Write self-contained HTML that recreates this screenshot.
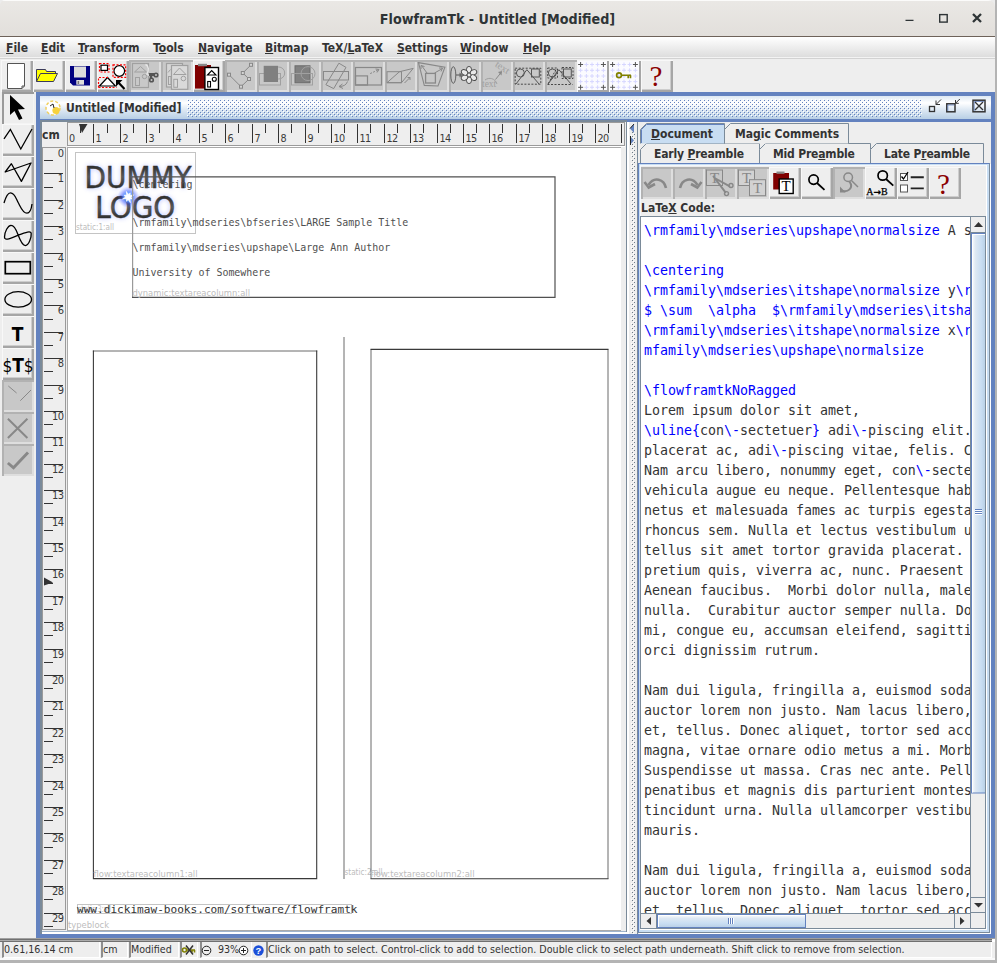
<!DOCTYPE html><html><head><meta charset="utf-8"><title>FlowframTk - Untitled [Modified]</title><style>
*{box-sizing:border-box}
html,body{margin:0;padding:0}
body{width:997px;height:963px;overflow:hidden;background:#b4b4b4;font-family:"DejaVu Sans Condensed","Liberation Sans",sans-serif;font-size:12px;color:#333;position:relative}
.a{position:absolute}
#win{left:0;top:0;width:995px;height:960px;background:#eee;border-radius:5px 7px 0 0;overflow:hidden}
#tb{left:0;top:0;width:995px;height:37px;background:linear-gradient(#eae8e5,#e2dfdb);border-bottom:1px solid #6e6259;border-top:1px solid #fbfbfa}
#title{left:0;top:10px;width:995px;text-align:center;font-weight:bold;font-size:14.2px;color:#2e3436;line-height:18px;white-space:nowrap}
#menu{left:0;top:37px;width:995px;height:23px;background:linear-gradient(#fff 0,#dcdcdc 20.5px,#f3f3f3 20.5px,#f3f3f3 21.5px,#d2d2d2 21.5px,#d2d2d2 22.5px,#eee 22.5px)}
.mi{position:absolute;top:4px;font-weight:bold;font-size:12px;line-height:15px;color:#333;white-space:nowrap}
u{text-decoration:underline;text-underline-offset:1px}
.btn{position:absolute;width:32px;height:32px;background:#eee;box-shadow:inset 1px 1px 0 #f8f8f8,inset -2px -2px 0 #a6a6a6,inset -3px -3px 0 #cdcdcd}
.btn.dis{background:#c8c8c8;box-shadow:inset 2px 2px 0 #b2b2b2,inset -2px -2px 0 #dedede}
.btn.sel{background:#eee;box-shadow:inset 2px 2px 0 #9a9a9a,inset -1px -1px 0 #f4f4f4}
.btn svg{position:absolute;left:0;top:0}
#if{left:36px;top:92px;width:959px;height:846px;background:#6382bf}
#ift{left:4px;top:4px;width:951px;height:23px;background:linear-gradient(#dde8f3 0%,#fff 30%,#dde8f3 60%,#b8cfe5 100%)}
#iftt{left:26px;top:4px;font-weight:bold;font-size:12px;line-height:17px;color:#333;white-space:nowrap}
#ifc{left:6px;top:30px;width:949px;height:812px;overflow:hidden;background:#eee}
#ifcb{left:4px;top:28px;width:587px;height:814px;background:#7a8a99}
#status{left:0;top:938px;width:995px;height:22px;background:#eee}
#code .ln{font-family:"DejaVu Sans Mono","Liberation Mono",monospace;font-size:13.3px;line-height:20px;height:20px;white-space:pre;color:#333;letter-spacing:-0.01px}
#code .b{color:#0000ff}
#code .k{color:#333}
.sb{position:absolute;top:4px;height:16px;padding-top:2px;border-style:solid;border-width:0 1px 1px 2px;border-color:#8e8e8e #fff #fff #8e8e8e;font-size:10.6px;line-height:11px;padding-left:0px;background:#eee;white-space:nowrap;overflow:hidden;color:#333}
</style></head><body>
<div class="a" style="left:0;top:0;width:995px;height:10px;background:#ececec"></div>
<div id="win" class="a">
<div id="tb" class="a"></div><div id="title" class="a">FlowframTk - Untitled [Modified]</div>
<svg class="a" style="left:900px;top:8px" width="90" height="20" viewBox="900 8 90 20"><path d="M905.500 20.300h8" stroke="#2e3436" stroke-width="1.300" fill="none"/><rect x="939.700" y="14.600" width="7.500" height="7.500" fill="none" stroke="#2e3436" stroke-width="1.400"/><path d="M973 14l8 8M981 14l-8 8" stroke="#2e3436" stroke-width="2.300" fill="none"/></svg>
<div id="menu" class="a">
<div class="mi" style="left:6px"><u>F</u>ile</div>
<div class="mi" style="left:41px"><u>E</u>dit</div>
<div class="mi" style="left:78px"><u>T</u>ransform</div>
<div class="mi" style="left:153px">T<u>o</u>ols</div>
<div class="mi" style="left:198px"><u>N</u>avigate</div>
<div class="mi" style="left:265px"><u>B</u>itmap</div>
<div class="mi" style="left:322px">TeX/<u>L</u>aTeX</div>
<div class="mi" style="left:397px"><u>S</u>ettings</div>
<div class="mi" style="left:460px"><u>W</u>indow</div>
<div class="mi" style="left:523px"><u>H</u>elp</div>
</div>
<div class="btn " style="left:1px;top:60px"><svg width="32" height="32" viewBox="0 0 32 32"><path d="M6.500 3.500H23.500V26L21 28.500H6.500Z" fill="#fff" stroke="#555" stroke-width="1"/><path d="M23.500 26H21V28.500" fill="none" stroke="#555"/></svg></div>
<div class="btn " style="left:33px;top:60px"><svg width="32" height="32" viewBox="0 0 32 32"><path d="M3.500 21.500V9.500H12.500L13.500 11.500H22.500V13.500" fill="#ff0" stroke="#3a3a5a" stroke-width="1"/><path d="M3.500 21.500L7.500 13.500H24.500L20.500 21.500Z" fill="#ff0" stroke="#3a3a5a" stroke-width="1" stroke-linejoin="round"/></svg></div>
<div class="btn " style="left:65px;top:60px"><svg width="32" height="32" viewBox="0 0 32 32"><path d="M5 6H25V25.500H8L5 22.500Z" fill="#000080"/><rect x="9" y="6.500" width="12" height="11" fill="#dcdcdc"/><rect x="11.300" y="20" width="7.700" height="4.700" fill="#dcdcdc"/><rect x="12.600" y="21" width="1.500" height="3" fill="#777"/></svg></div>
<div class="btn " style="left:97px;top:60px"><svg width="32" height="32" viewBox="0 0 32 32"><rect x="4" y="5.200" width="6.500" height="5.200" fill="#fff" stroke="#000" stroke-width="1.200"/><rect x="2.500" y="3.500" width="9.500" height="8.500" fill="none" stroke="#f00" stroke-width="1.200" stroke-dasharray="2 1.500"/><circle cx="22.300" cy="11" r="5.300" fill="#fff" stroke="#000" stroke-width="1.200"/><rect x="16" y="4.800" width="12.600" height="12.600" fill="none" stroke="#f00" stroke-width="1.200" stroke-dasharray="2 1.500"/><path d="M2.500 26L10.500 17.500L18.400 26Z" fill="#fff" stroke="#000" stroke-width="1.200"/><path d="M1.500 27.500V17.500H12M1.500 27.500H19.500" fill="none" stroke="#f00" stroke-width="1.200" stroke-dasharray="2 1.500"/><path d="M20 21L27.500 29" stroke="#000" stroke-width="2.200"/><path d="M19 20V26.500L25.500 20Z" fill="#000"/></svg></div>
<div class="btn dis" style="left:129px;top:60px"><svg width="32" height="32" viewBox="0 0 32 32"><rect x="3.500" y="3.500" width="16" height="24" fill="none" stroke="#a0a0a0" stroke-width="1.200"/><path d="M5.500 12L11.500 6.500L17.500 12Z" fill="none" stroke="#a0a0a0"/><rect x="6.500" y="17.500" width="4" height="8" fill="none" stroke="#a0a0a0"/><circle cx="15.500" cy="16.500" r="2.200" fill="none" stroke="#a0a0a0"/><path d="M16.500 4.500C20 6 20 11 18 14L21 16" fill="none" stroke="#e6e6e6" stroke-width="1.400"/><path d="M20 14.500H26" stroke="#555" stroke-width="3"/><circle cx="27" cy="15" r="1.800" fill="none" stroke="#555" stroke-width="1.600"/><circle cx="22.500" cy="20" r="1.800" fill="none" stroke="#555" stroke-width="1.600"/><path d="M22 14V18.500" stroke="#555" stroke-width="2.500"/></svg></div>
<div class="btn dis" style="left:161px;top:60px"><svg width="32" height="32" viewBox="0 0 32 32"><rect x="5.500" y="3.500" width="16" height="23.500" fill="#d6d6d6" stroke="#a0a0a0" stroke-width="1.200"/><path d="M7 12.500L9.500 9.500" stroke="#a0a0a0" fill="none"/><rect x="7.500" y="16.500" width="2.500" height="8" fill="none" stroke="#a0a0a0"/><rect x="10.500" y="5.500" width="16.300" height="23.800" fill="#d9d9d9" stroke="#a0a0a0" stroke-width="1.200"/><path d="M12.500 14.500L18.500 8L25 14.500Z" fill="none" stroke="#a0a0a0"/><rect x="12.800" y="19.300" width="3.700" height="8" fill="none" stroke="#a0a0a0"/><circle cx="22.400" cy="18.500" r="2.300" fill="none" stroke="#a0a0a0"/></svg></div>
<div class="btn " style="left:193px;top:60px"><svg width="32" height="32" viewBox="0 0 32 32"><rect x="2" y="5" width="16" height="23.600" fill="#800000"/><rect x="5" y="3.800" width="9" height="2.400" fill="#8a8a8a"/><rect x="11.900" y="7.500" width="13.600" height="22" fill="#fff" stroke="#000" stroke-width="1.400"/><path d="M14.500 15L18.700 10.500L23 15Z" fill="none" stroke="#000" stroke-width="1.100"/><circle cx="21.300" cy="19.300" r="2" fill="none" stroke="#000" stroke-width="1.100"/><rect x="14.700" y="21.500" width="2.800" height="5.500" fill="none" stroke="#000" stroke-width="1.100"/></svg></div>
<div class="btn dis" style="left:225px;top:60px"><svg width="32" height="32" viewBox="0 0 32 32"><path d="M4 14.700L16 26.700L24 19L17.800 13L26 4.800" fill="none" stroke="#888888" stroke-width="1"/><rect x="2.5" y="13.2" width="3" height="3" fill="#d4d4d4" stroke="#888888"/><rect x="14.5" y="25.2" width="3" height="3" fill="#d4d4d4" stroke="#888888"/><rect x="22.5" y="17.5" width="3" height="3" fill="#d4d4d4" stroke="#888888"/><rect x="16.3" y="11.5" width="3" height="3" fill="#d4d4d4" stroke="#888888"/><rect x="24.5" y="3.3" width="3" height="3" fill="#d4d4d4" stroke="#888888"/></svg></div>
<div class="btn dis" style="left:257px;top:60px"><svg width="32" height="32" viewBox="0 0 32 32"><circle cx="21.700" cy="13" r="6" fill="none" stroke="#a0a0a0"/><rect x="2.500" y="13.500" width="21" height="11.500" fill="none" stroke="#a0a0a0"/><rect x="6.700" y="5.800" width="14.300" height="16.200" fill="#808080"/></svg></div>
<div class="btn dis" style="left:289px;top:60px"><svg width="32" height="32" viewBox="0 0 32 32"><rect x="6" y="5.800" width="15" height="17" fill="#808080" stroke="#6a6a6a"/><circle cx="19" cy="13.600" r="7" fill="none" stroke="#a0a0a0"/><rect x="2.500" y="13.500" width="21" height="11.500" fill="none" stroke="#a0a0a0"/></svg></div>
<div class="btn dis" style="left:321px;top:60px"><svg width="32" height="32" viewBox="0 0 32 32"><rect x="2.500" y="11.500" width="25" height="8.500" fill="none" stroke="#888888"/><path d="M17.900 3.200L25 7.400L12.700 28.600L4.900 24.700Z" fill="none" stroke="#888888"/><path d="M26.500 21.500C25.500 25 22 26.500 18.500 26.500" fill="none" stroke="#888888"/><path d="M21.500 24L18 26.500L22 28.500" fill="none" stroke="#888888"/></svg></div>
<div class="btn dis" style="left:353px;top:60px"><svg width="32" height="32" viewBox="0 0 32 32"><rect x="2.500" y="7.500" width="26" height="17.500" fill="none" stroke="#888888" stroke-width="1.200"/><rect x="2.500" y="15.900" width="12" height="9.100" fill="none" stroke="#888888" stroke-width="1.200"/><path d="M17.200 13.600L25 10" stroke="#888888" stroke-dasharray="2 1.200"/><path d="M22.500 9L26 9.500L24 12.500" fill="none" stroke="#888888"/></svg></div>
<div class="btn dis" style="left:385px;top:60px"><svg width="32" height="32" viewBox="0 0 32 32"><rect x="2" y="11.700" width="14.500" height="11" fill="none" stroke="#888888"/><path d="M2 22.700L14.500 11.700L28.200 8.400L16.500 22.700Z" fill="none" stroke="#888888"/><path d="M19.500 23L25 17.500" stroke="#888888"/><path d="M22.500 17.500H25V20" fill="none" stroke="#888888"/></svg></div>
<div class="btn dis" style="left:417px;top:60px"><svg width="32" height="32" viewBox="0 0 32 32"><path d="M1.500 2.600L27.900 7.100L21 26L7.300 25.400Z" fill="none" stroke="#888888" stroke-width="1.100"/><rect x="8.600" y="13.400" width="9.800" height="9.600" fill="none" stroke="#888888" stroke-width="1.300"/><path d="M10 13L4.500 5.500M17.500 13L25.500 8.500" stroke="#888888"/><path d="M4 9V5.500L7.500 6.500M22 8H25.500L24 11.500" fill="none" stroke="#888888"/></svg></div>
<div class="btn dis" style="left:449px;top:60px"><svg width="32" height="32" viewBox="0 0 32 32"><ellipse cx="4.300" cy="15" rx="2.500" ry="8.300" fill="none" stroke="#555" stroke-width="0.900"/><path d="M7 15H12" stroke="#666" stroke-width="1.200"/><path d="M10.500 12.500L13.500 15L10.500 17.500Z" fill="#666"/><ellipse cx="20" cy="9.800" rx="2.600" ry="3.400" transform="rotate(0 20 15)" fill="#e8e8e8" stroke="#444" stroke-width="0.900"/><ellipse cx="20" cy="9.800" rx="2.600" ry="3.400" transform="rotate(60 20 15)" fill="#e8e8e8" stroke="#444" stroke-width="0.900"/><ellipse cx="20" cy="9.800" rx="2.600" ry="3.400" transform="rotate(120 20 15)" fill="#e8e8e8" stroke="#444" stroke-width="0.900"/><ellipse cx="20" cy="9.800" rx="2.600" ry="3.400" transform="rotate(180 20 15)" fill="#e8e8e8" stroke="#444" stroke-width="0.900"/><ellipse cx="20" cy="9.800" rx="2.600" ry="3.400" transform="rotate(240 20 15)" fill="#e8e8e8" stroke="#444" stroke-width="0.900"/><ellipse cx="20" cy="9.800" rx="2.600" ry="3.400" transform="rotate(300 20 15)" fill="#e8e8e8" stroke="#444" stroke-width="0.900"/><circle cx="20" cy="15" r="2" fill="#e8e8e8" stroke="#444" stroke-width="0.900"/></svg></div>
<div class="btn dis" style="left:481px;top:60px"><svg width="32" height="32" viewBox="0 0 32 32"><path d="M4 20C8 17 14 18 16 24" fill="none" stroke="#a0a0a0"/><text x="1" y="27" font-size="9.500" fill="#a0a0a0" font-family="'Liberation Serif','DejaVu Serif',serif">text</text><path d="M14.500 19.500L20.500 12" stroke="#888888"/><path d="M17 12L21 11L20.500 15.500Z" fill="#888888"/><text x="13.500" y="6" font-size="10" fill="#a0a0a0" font-family="'Liberation Serif','DejaVu Serif',serif" transform="rotate(33 13.500 6)">text</text></svg></div>
<div class="btn dis" style="left:513px;top:60px"><svg width="32" height="32" viewBox="0 0 32 32"><circle cx="7.400" cy="13" r="4" fill="none" stroke="#555"/><rect x="18.500" y="9" width="7.800" height="8" fill="none" stroke="#555"/><path d="M3 24L13.900 9.700L26 24" fill="none" stroke="#555"/><rect x="2.200" y="8.200" width="25.600" height="16" fill="none" stroke="#3a3a3a" stroke-width="0.900" stroke-dasharray="2 1.500"/></svg></div>
<div class="btn dis" style="left:545px;top:60px"><svg width="32" height="32" viewBox="0 0 32 32"><circle cx="7.400" cy="13" r="4" fill="none" stroke="#555"/><rect x="18.500" y="9" width="7.800" height="8" fill="none" stroke="#555"/><path d="M3 24L13.900 9.700L26 24" fill="none" stroke="#555"/><rect x="2.700" y="8" width="9.800" height="10" fill="none" stroke="#3a3a3a" stroke-width="0.900" stroke-dasharray="2 1.500"/><rect x="17" y="7.500" width="11" height="11" fill="none" stroke="#3a3a3a" stroke-width="0.900" stroke-dasharray="2 1.500"/><path d="M2.500 24.500H27.500M11 9.500L3 24" fill="none" stroke="#3a3a3a" stroke-width="0.900" stroke-dasharray="2 1.500"/></svg></div>
<div class="btn " style="left:577px;top:60px"><svg width="32" height="32" viewBox="0 0 32 32"><rect x="1" y="1" width="29" height="29" fill="#fbfbff"/><path d="M1.6 10.3H5.6M3.6 8.3V12.3M1.6 16.0H5.6M3.6 14.0V18.0M1.6 21.6H5.6M3.6 19.6V23.6M7.4 4.5H11.4M9.4 2.5V6.5M7.4 10.3H11.4M9.4 8.3V12.3M7.4 16.0H11.4M9.4 14.0V18.0M7.4 21.6H11.4M9.4 19.6V23.6M7.4 27.3H11.4M9.4 25.3V29.3M13.0 4.5H17.0M15.0 2.5V6.5M13.0 10.3H17.0M15.0 8.3V12.3M13.0 16.0H17.0M15.0 14.0V18.0M13.0 21.6H17.0M15.0 19.6V23.6M13.0 27.3H17.0M15.0 25.3V29.3M18.6 4.5H22.6M20.6 2.5V6.5M18.6 10.3H22.6M20.6 8.3V12.3M18.6 16.0H22.6M20.6 14.0V18.0M18.6 21.6H22.6M20.6 19.6V23.6M18.6 27.3H22.6M20.6 25.3V29.3M24.4 10.3H28.4M26.4 8.3V12.3M24.4 16.0H28.4M26.4 14.0V18.0M24.4 21.6H28.4M26.4 19.6V23.6" stroke="#d6d6ff" stroke-width="1"/><path d="M1.1 4.5H6.1M3.6 2.0V7.0M1.1 27.3H6.1M3.6 24.8V29.8M23.9 4.5H28.9M26.4 2.0V7.0M23.9 27.3H28.9M26.4 24.8V29.8" stroke="#555" stroke-width="1"/></svg></div>
<div class="btn " style="left:609px;top:60px"><svg width="32" height="32" viewBox="0 0 32 32"><rect x="1" y="1" width="29" height="29" fill="#fbfbff"/><path d="M1.6 10.3H5.6M3.6 8.3V12.3M1.6 16.0H5.6M3.6 14.0V18.0M1.6 21.6H5.6M3.6 19.6V23.6M7.4 4.5H11.4M9.4 2.5V6.5M7.4 10.3H11.4M9.4 8.3V12.3M7.4 16.0H11.4M9.4 14.0V18.0M7.4 21.6H11.4M9.4 19.6V23.6M7.4 27.3H11.4M9.4 25.3V29.3M13.0 4.5H17.0M15.0 2.5V6.5M13.0 10.3H17.0M15.0 8.3V12.3M13.0 16.0H17.0M15.0 14.0V18.0M13.0 21.6H17.0M15.0 19.6V23.6M13.0 27.3H17.0M15.0 25.3V29.3M18.6 4.5H22.6M20.6 2.5V6.5M18.6 10.3H22.6M20.6 8.3V12.3M18.6 16.0H22.6M20.6 14.0V18.0M18.6 21.6H22.6M20.6 19.6V23.6M18.6 27.3H22.6M20.6 25.3V29.3M24.4 10.3H28.4M26.4 8.3V12.3M24.4 16.0H28.4M26.4 14.0V18.0M24.4 21.6H28.4M26.4 19.6V23.6" stroke="#d6d6ff" stroke-width="1"/><path d="M1.1 4.5H6.1M3.6 2.0V7.0M1.1 27.3H6.1M3.6 24.8V29.8M23.9 4.5H28.9M26.4 2.0V7.0M23.9 27.3H28.9M26.4 24.8V29.8" stroke="#555" stroke-width="1"/><circle cx="10" cy="15.300" r="2.400" fill="none" stroke="#808000" stroke-width="1.700"/><path d="M12.500 15.300H22M19.200 15.300V18.300M21.500 15.300V18.300" stroke="#808000" stroke-width="1.600" fill="none"/></svg></div>
<div class="btn " style="left:641px;top:60px"><svg width="32" height="32" viewBox="0 0 32 32"><text x="15" y="26" font-size="29" fill="#8b0000" text-anchor="middle" font-family="'Liberation Serif','DejaVu Serif',serif">?</text></svg></div>
<div class="btn sel" style="left:2px;top:92px"><svg width="32" height="32" viewBox="0 0 32 32"><path d="M8 3V23L12.500 19L17 28L20.500 26.500L16 17.500L23 17Z" fill="#000"/></svg></div>
<div class="btn " style="left:2px;top:124px"><svg width="32" height="32" viewBox="0 0 32 32"><path d="M2 14.800L8.400 5.500L18.800 25L30 5" fill="none" stroke="#000" stroke-width="1.300"/></svg></div>
<div class="btn " style="left:2px;top:156px"><svg width="32" height="32" viewBox="0 0 32 32"><path d="M3.200 16L29 7L19.400 25.400L9.400 7.700Z" fill="none" stroke="#000" stroke-width="1.300" stroke-linejoin="round"/></svg></div>
<div class="btn " style="left:2px;top:188px"><svg width="32" height="32" viewBox="0 0 32 32"><path d="M2 15C4 8 6 4.800 8.500 4.800C13 4.800 14 11 16.700 15.500C19 20 21 25.200 25 25.200C28 25.200 29.500 20 30 16" fill="none" stroke="#000" stroke-width="1.300"/></svg></div>
<div class="btn " style="left:2px;top:220px"><svg width="32" height="32" viewBox="0 0 32 32"><path d="M2.500 17C2.500 12 6 5.300 9 5.300C13 5.300 15 12 16.200 15.200C18 20 20 25.600 23.400 25.600C27 25.600 29.500 17 29.200 13.500C29 10.500 24 12 16.200 15.200C10 18 2.500 21.500 2.500 17Z" fill="none" stroke="#000" stroke-width="1.300"/></svg></div>
<div class="btn " style="left:2px;top:252px"><svg width="32" height="32" viewBox="0 0 32 32"><rect x="3.300" y="9.700" width="25" height="12" fill="none" stroke="#000" stroke-width="1.700"/></svg></div>
<div class="btn " style="left:2px;top:284px"><svg width="32" height="32" viewBox="0 0 32 32"><ellipse cx="16.200" cy="15.400" rx="13.300" ry="7.700" fill="none" stroke="#000" stroke-width="1.300"/></svg></div>
<div class="btn " style="left:2px;top:316px"><svg width="32" height="32" viewBox="0 0 32 32"><text x="15.700" y="24.500" font-size="19" font-weight="bold" fill="#000" text-anchor="middle" font-family="'DejaVu Sans Condensed','Liberation Sans',sans-serif">T</text></svg></div>
<div class="btn " style="left:2px;top:348px"><svg width="32" height="32" viewBox="0 0 32 32"><text x="16" y="23.800" font-size="17" fill="#000" text-anchor="middle" font-family="'DejaVu Sans Condensed','Liberation Sans',sans-serif">$<tspan font-size="19" font-weight="bold">T</tspan>$</text></svg></div>
<div class="btn dis" style="left:2px;top:380px"><svg width="32" height="32" viewBox="0 0 32 32"><path d="M6.300 6L14.600 13M18.300 20.700L29 10" stroke="#888888" stroke-width="1"/></svg></div>
<div class="btn dis" style="left:2px;top:412px"><svg width="32" height="32" viewBox="0 0 32 32"><path d="M5.900 6.800L25.400 26M25.400 6.800L5.900 26" stroke="#888888" stroke-width="2"/></svg></div>
<div class="btn dis" style="left:2px;top:444px"><svg width="32" height="32" viewBox="0 0 32 32"><path d="M5.900 19L11.500 23.800L26 8.600" fill="none" stroke="#888888" stroke-width="2.900"/></svg></div>
<div id="if" class="a">
<div id="ift" class="a">
<svg class="a" style="left:5px;top:3px" width="18" height="18" viewBox="0 0 18 18"><circle cx="8" cy="9" r="7" fill="#fff" stroke="#f0d060" stroke-width="1.5" stroke-dasharray="3 2"/><circle cx="11" cy="11.5" r="3.6" fill="#f7d23e"/><path d="M5 7l3-2 1 4" stroke="#222" fill="none"/></svg>
<div id="iftt" class="a">Untitled [Modified]</div>
<svg class="a" style="left:147px;top:3px" width="735" height="18"><defs><pattern id="bp" width="4" height="4" patternUnits="userSpaceOnUse"><rect x="0" y="0" width="1" height="1" fill="#fff"/><rect x="1" y="1" width="1" height="1" fill="#6382bf"/><rect x="2" y="2" width="1" height="1" fill="#fff"/><rect x="3" y="3" width="1" height="1" fill="#6382bf"/></pattern></defs><rect width="735" height="18" fill="url(#bp)"/></svg>
<svg class="a" style="left:884px;top:0px" width="66" height="23" viewBox="924 96 66 23" fill="none" stroke="#333"><rect x="929.500" y="106.500" width="5" height="5" stroke-width="1.300"/><path d="M941 99.500l-5 5M936 100.500v4h4" stroke-width="1"/><rect x="946.800" y="103.800" width="8.200" height="8" stroke-width="1.500"/><path d="M947.800 111V105h6.500" stroke="#6382bf" stroke-width="0.800"/><path d="M959.800 99l-4.300 4.300M955.500 100v3.300h3.300" stroke-width="1"/><rect x="973" y="100.200" width="12" height="11.600" stroke-width="1.500"/><path d="M974.200 111V101.500h10" stroke="#6382bf" stroke-width="0.800"/><path d="M975 102l8 8M983 102l-8 8" stroke-width="1.300"/></svg>
</div>
<div id="ifcb" class="a"></div><div id="ifc" class="a">
<svg class="a" style="left:0;top:0" width="585" height="812" viewBox="42 122 585 812" font-family=''DejaVu Sans Condensed','Liberation Sans',sans-serif'>
<rect x="42" y="122" width="585" height="813" fill="#eee"/>
<text x="42" y="138.500" font-weight="bold" font-size="12" fill="#333" font-family=''DejaVu Sans Condensed','Liberation Sans',sans-serif'>cm</text>
<rect x="67.500" y="122.500" width="557" height="23" fill="#eee" stroke="#9a9a9a"/>
<path d="M68 146.500H625" stroke="#fff"/>
<path d="M80.5 124V133M93.5 124V143M107.5 124V133M120.5 124V143M133.5 124V133M146.5 124V143M159.5 124V133M173.5 124V143M186.5 124V133M199.5 124V143M212.5 124V133M225.5 124V143M238.5 124V133M252.5 124V143M265.5 124V133M278.5 124V143M291.5 124V133M305.5 124V143M318.5 124V133M331.5 124V143M344.5 124V133M357.5 124V143M370.5 124V133M384.5 124V143M397.5 124V133M410.5 124V143M423.5 124V133M437.5 124V143M450.5 124V133M463.5 124V143M476.5 124V133M489.5 124V143M502.5 124V133M516.5 124V143M529.5 124V133M542.5 124V143M555.5 124V133M569.5 124V143M582.5 124V133M595.5 124V143M608.5 124V133M621.5 124V143" stroke="#333" stroke-width="1" fill="none"/>
<g font-size="10.700" letter-spacing="-0.700" fill="#3a3a3a" font-family="'DejaVu Sans Condensed','Liberation Sans',sans-serif"><text x="69.0" y="142">0</text><text x="95.5" y="142">1</text><text x="122.5" y="142">2</text><text x="148.5" y="142">3</text><text x="175.5" y="142">4</text><text x="201.5" y="142">5</text><text x="227.5" y="142">6</text><text x="254.5" y="142">7</text><text x="280.5" y="142">8</text><text x="307.5" y="142">9</text><text x="333.5" y="142">10</text><text x="359.5" y="142">11</text><text x="386.5" y="142">12</text><text x="412.5" y="142">13</text><text x="439.5" y="142">14</text><text x="465.5" y="142">15</text><text x="491.5" y="142">16</text><text x="518.5" y="142">17</text><text x="544.5" y="142">18</text><text x="571.5" y="142">19</text><text x="597.5" y="142">20</text></g>
<path d="M79 124h8.500l-5.500 9z" fill="#333"/>
<rect x="42.500" y="147.500" width="23" height="782" fill="#eee" stroke="#9a9a9a"/>
<path d="M44 160.5H53M44 173.5H63M44 187.5H53M44 200.5H63M44 213.5H53M44 226.5H63M44 239.5H53M44 253.5H63M44 266.5H53M44 279.5H63M44 292.5H53M44 305.5H63M44 319.5H53M44 332.5H63M44 345.5H53M44 358.5H63M44 371.5H53M44 385.5H63M44 398.5H53M44 411.5H63M44 424.5H53M44 437.5H63M44 451.5H53M44 464.5H63M44 477.5H53M44 490.5H63M44 503.5H53M44 517.5H63M44 530.5H53M44 543.5H63M44 556.5H53M44 569.5H63M44 583.5H53M44 596.5H63M44 609.5H53M44 622.5H63M44 635.5H53M44 649.5H63M44 662.5H53M44 675.5H63M44 688.5H53M44 701.5H63M44 715.5H53M44 728.5H63M44 741.5H53M44 754.5H63M44 767.5H53M44 781.5H63M44 794.5H53M44 807.5H63M44 820.5H53M44 833.5H63M44 847.5H53M44 860.5H63M44 873.5H53M44 886.5H63M44 899.5H53M44 913.5H63M44 926.5H53" stroke="#333" stroke-width="1" fill="none"/>
<g font-size="11" letter-spacing="-0.600" fill="#3a3a3a" font-family="'DejaVu Sans Condensed','Liberation Sans',sans-serif"><text x="63.500" y="156.5" text-anchor="end">0</text><text x="63.500" y="181.8" text-anchor="end">1</text><text x="63.500" y="208.8" text-anchor="end">2</text><text x="63.500" y="234.8" text-anchor="end">3</text><text x="63.500" y="261.8" text-anchor="end">4</text><text x="63.500" y="287.8" text-anchor="end">5</text><text x="63.500" y="313.8" text-anchor="end">6</text><text x="63.500" y="340.8" text-anchor="end">7</text><text x="63.500" y="366.8" text-anchor="end">8</text><text x="63.500" y="393.8" text-anchor="end">9</text><text x="63.500" y="419.8" text-anchor="end">10</text><text x="63.500" y="445.8" text-anchor="end">11</text><text x="63.500" y="472.8" text-anchor="end">12</text><text x="63.500" y="498.8" text-anchor="end">13</text><text x="63.500" y="525.8" text-anchor="end">14</text><text x="63.500" y="551.8" text-anchor="end">15</text><text x="63.500" y="577.8" text-anchor="end">16</text><text x="63.500" y="604.8" text-anchor="end">17</text><text x="63.500" y="630.8" text-anchor="end">18</text><text x="63.500" y="657.8" text-anchor="end">19</text><text x="63.500" y="683.8" text-anchor="end">20</text><text x="63.500" y="709.8" text-anchor="end">21</text><text x="63.500" y="736.8" text-anchor="end">22</text><text x="63.500" y="762.8" text-anchor="end">23</text><text x="63.500" y="789.8" text-anchor="end">24</text><text x="63.500" y="815.8" text-anchor="end">25</text><text x="63.500" y="841.8" text-anchor="end">26</text><text x="63.500" y="868.8" text-anchor="end">27</text><text x="63.500" y="894.8" text-anchor="end">28</text><text x="63.500" y="921.8" text-anchor="end">29</text></g>
<path d="M44 577.500L53 582.500L44 585.500z" fill="#333"/>
<rect x="67.500" y="147.500" width="554" height="783" fill="#fff" stroke="#aaa"/>
<rect x="621" y="147" width="6" height="788" fill="#eee"/>
<path d="M626.500 122V935" stroke="#7a8a99"/>
<path d="M42 931.500H626" stroke="#9fb4cc"/><rect x="42" y="932" width="585" height="3" fill="#fff"/>
<defs><radialGradient id="glow"><stop offset="0" stop-color="#fff"/><stop offset="0.200" stop-color="#dff0ff"/><stop offset="0.400" stop-color="#5f96ff" stop-opacity="0.900"/><stop offset="0.650" stop-color="#3a55ff" stop-opacity="0.400"/><stop offset="1" stop-color="#6a7cff" stop-opacity="0"/></radialGradient><radialGradient id="halo"><stop offset="0" stop-color="#c9d0ff" stop-opacity="0.900"/><stop offset="0.600" stop-color="#dfe3ff" stop-opacity="0.600"/><stop offset="1" stop-color="#fff" stop-opacity="0"/></radialGradient><linearGradient id="lg" x1="0" y1="0" x2="0" y2="1"><stop offset="0" stop-color="#111"/><stop offset="0.500" stop-color="#5a5a5a"/><stop offset="1" stop-color="#111"/></linearGradient><filter id="bl" x="-20%" y="-20%" width="140%" height="140%"><feGaussianBlur stdDeviation="2.800"/></filter></defs>
<rect x="75.500" y="152.500" width="120" height="81" fill="#fff" stroke="#c4c4c4"/>
<g font-family="'DejaVu Sans Condensed','Liberation Sans',sans-serif" font-size="31" text-anchor="middle">
<g filter="url(#bl)" fill="#a4aeff" opacity="0.900"><text x="138.100" y="187.800">DUMMY</text><text x="135.300" y="218.200">LOGO</text></g>
<g fill="url(#lg)" stroke="#333" stroke-width="0.400"><text x="138.100" y="187.800">DUMMY</text><text x="135.300" y="218.200">LOGO</text></g>
</g>
<circle cx="128.300" cy="197" r="11" fill="url(#glow)"/>
<g fill="#fff" opacity="0.900"><ellipse cx="128.300" cy="197" rx="6.500" ry="1.100" transform="rotate(-20 128.300 197)"/><ellipse cx="128.300" cy="197" rx="6.500" ry="1.100" transform="rotate(70 128.300 197)"/><ellipse cx="128.300" cy="197" rx="5" ry="0.900" transform="rotate(25 128.300 197)"/><ellipse cx="128.300" cy="197" rx="5" ry="0.900" transform="rotate(115 128.300 197)"/><circle cx="128.300" cy="197" r="2.600"/></g>
<text x="76" y="230.300" textLength="38" lengthAdjust="spacingAndGlyphs" font-family="'DejaVu Sans Condensed','Liberation Sans',sans-serif" font-size="9.500" fill="#bdbdbd">static:1:all</text>
<path d="M132.600 176.900V297.400" stroke="#9a9a9a" stroke-width="1.200"/><path d="M132 176.900H555.600M555 176.900V297.400M132 297.400H555.600" fill="none" stroke="#505050" stroke-width="1.200"/>
<g font-family="'DejaVu Sans Mono','Liberation Mono',monospace" font-size="9.960" fill="#505050" xml:space="preserve"><text x="132.500" y="187.800">\centering</text><text x="132.500" y="225.500">\rmfamily\mdseries\bfseries\LARGE Sample Title</text><text x="132.500" y="250.500">\rmfamily\mdseries\upshape\Large Ann Author</text><text x="132.500" y="275.500">University of Somewhere</text></g>
<text x="132.500" y="296" textLength="117.500" lengthAdjust="spacingAndGlyphs" font-family="'DejaVu Sans Condensed','Liberation Sans',sans-serif" font-size="9.500" fill="#bdbdbd">dynamic:textareacolumn:all</text>
<path d="M93.400 350.500V878.600H316.700V350.500" fill="none" stroke="#3a3a3a" stroke-width="1.100"/><path d="M92.850 351H317.250" stroke="#3a3a3a" stroke-width="0.750"/>
<text x="93.500" y="877" textLength="104" lengthAdjust="spacingAndGlyphs" font-family="'DejaVu Sans Condensed','Liberation Sans',sans-serif" font-size="9.500" fill="#bdbdbd">flow:textareacolumn1:all</text>
<path d="M344 337V879" stroke="#3a3a3a" stroke-width="0.750"/>
<text x="344.500" y="875" textLength="38" lengthAdjust="spacingAndGlyphs" font-family="'DejaVu Sans Condensed','Liberation Sans',sans-serif" font-size="9.500" fill="#bdbdbd">static:2:all</text>
<path d="M370.500 349.400H608.500M370.500 878.700H608.500" stroke="#3a3a3a" stroke-width="1.100"/><path d="M371 349.400V878.700M608 349.400V878.700" stroke="#3a3a3a" stroke-width="0.750"/>
<text x="370.500" y="877" textLength="104" lengthAdjust="spacingAndGlyphs" font-family="'DejaVu Sans Condensed','Liberation Sans',sans-serif" font-size="9.500" fill="#bdbdbd">flow:textareacolumn2:all</text>
<rect x="77.500" y="904.500" width="274" height="9" fill="none" stroke="#c4c4c4"/>
<text x="78" y="911.500" textLength="33" lengthAdjust="spacingAndGlyphs" font-family="'DejaVu Sans Condensed','Liberation Sans',sans-serif" font-size="9.500" fill="#bdbdbd">static:3:all</text>
<text x="77" y="913" font-family="'DejaVu Sans Mono','Liberation Mono',monospace" font-size="11.100" fill="#333">www.dickimaw-books.com/software/flowframtk</text>
<text x="68" y="928" textLength="41" lengthAdjust="spacingAndGlyphs" font-family="'DejaVu Sans Condensed','Liberation Sans',sans-serif" font-size="9.500" fill="#bdbdbd">typeblock</text>
</svg>
<div class="a" style="left:585px;top:0;width:11px;height:812px;background:#eee"></div>
<svg class="a" style="left:585px;top:0" width="11" height="813"><defs><pattern id="sp" x="4" y="0" width="4" height="4" patternUnits="userSpaceOnUse"><rect x="1" y="2" width="1" height="1" fill="#6e7b88"/><rect x="3" y="0" width="1" height="1" fill="#6e7b88"/><rect x="0" y="1" width="1" height="1" fill="#fff"/><rect x="2" y="3" width="1" height="1" fill="#fff"/></pattern></defs><rect x="0" y="0" width="2" height="813" fill="#fff"/><rect x="4" y="10" width="4" height="803" fill="url(#sp)"/><path d="M3 6.500l4 -4.500v9z" fill="#6382bf"/><path d="M3 14v9l4 -4.500z" fill="#6382bf"/><path d="M3.500 14v9" stroke="#222"/><path d="M7 2l-4 4.500" stroke="#222" fill="none"/><path d="M10.500 0V813" stroke="#7a8a99"/></svg>
<div class="a" id="rp" style="left:596px;top:0;width:353px;height:812px;background:#eee">
<svg class="a" style="left:0;top:0" width="353" height="46" viewBox="638 122 353 46">
<path d="M640.5 163.5V149.5L646.5 143.5H759.5V163.5" fill="#eee" stroke="#7a8a99"/>
<path d="M759.5 163.5V149.5L765.5 143.5H870.5V163.5" fill="#eee" stroke="#7a8a99"/>
<path d="M870.5 163.5V149.5L876.5 143.5H983.5V163.5" fill="#eee" stroke="#7a8a99"/>
<path d="M724.5 143.5V129.5L730.5 123.5H848.5V143.5" fill="#eee" stroke="#7a8a99"/>
<path d="M640.5 143.5V129.5L646.5 123.5H724.5V143.5" fill="#c8ddf2" stroke="#7a8a99"/>
<path d="M641.500 143V129.500L646.500 124.500H724" stroke="#6382bf" fill="none"/>
</svg>
<div style="position:absolute;font-weight:bold;font-size:12px;line-height:15px;white-space:nowrap;color:#333;left:13px;top:5px"><u>D</u>ocument</div>
<div style="position:absolute;font-weight:bold;font-size:12px;line-height:15px;white-space:nowrap;color:#333;left:97px;top:5px">Ma<u>g</u>ic Comments</div>
<div style="position:absolute;font-weight:bold;font-size:12px;line-height:15px;white-space:nowrap;color:#333;letter-spacing:-0.18px;left:16px;top:25px">Early <u>P</u>reamble</div>
<div style="position:absolute;font-weight:bold;font-size:12px;line-height:15px;white-space:nowrap;color:#333;letter-spacing:-0.18px;left:135px;top:25px">Mid Pre<u>a</u>mble</div>
<div style="position:absolute;font-weight:bold;font-size:12px;line-height:15px;white-space:nowrap;color:#333;letter-spacing:-0.18px;left:246px;top:25px">Late P<u>r</u>eamble</div>
<div class="a" style="left:0;top:41px;width:352px;height:770px;border:1px solid #6382bf;border-right-color:#7a8a99;border-bottom-color:#7a8a99;box-shadow:1px 1px 0 #fff, inset 1px 1px 0 #c8ddf2, inset -2px -2px 0 #c8ddf2, inset -3px -3px 0 #fff, inset 2px 2px 0 #f4f8fc"></div>
<div class="btn dis" style="left:3px;top:45px"><svg width="32" height="32" viewBox="0 0 32 32"><path d="M25 21C23 12 13 9 7.500 18" fill="none" stroke="#888888" stroke-width="2.600"/><path d="M3.500 15L7.700 20.500L14 17" fill="none" stroke="#888888" stroke-width="2.600"/></svg></div>
<div class="btn dis" style="left:35px;top:45px"><svg width="32" height="32" viewBox="0 0 32 32"><g transform="translate(32 0) scale(-1 1)"><path d="M25 21C23 12 13 9 7.500 18" fill="none" stroke="#888888" stroke-width="2.600"/><path d="M3.500 15L7.700 20.500L14 17" fill="none" stroke="#888888" stroke-width="2.600"/></g></svg></div>
<div class="btn dis" style="left:67px;top:45px"><svg width="32" height="32" viewBox="0 0 32 32"><rect x="1.5" y="3.0" width="16.0" height="15.5" fill="none" stroke="#888888" stroke-width="1.0"/><text x="9.5" y="15.5" font-size="15" fill="#888888" text-anchor="middle" font-family="'Liberation Serif','DejaVu Serif',serif">T</text><path d="M8.500 9.500L20.300 25.200M10.500 11.500L24.300 19.200" stroke="#888888" stroke-width="2" stroke-linecap="round"/><circle cx="26" cy="18.500" r="2" fill="none" stroke="#888888" stroke-width="1.400"/><circle cx="21.500" cy="26.600" r="2" fill="none" stroke="#888888" stroke-width="1.400"/></svg></div>
<div class="btn dis" style="left:99px;top:45px"><svg width="32" height="32" viewBox="0 0 32 32"><rect x="1.5" y="3.0" width="16.0" height="15.5" fill="#d2d2d2" stroke="#888888" stroke-width="1.0"/><text x="9.5" y="15.5" font-size="15" fill="#888888" text-anchor="middle" font-family="'Liberation Serif','DejaVu Serif',serif">T</text><rect x="12.5" y="12.7" width="16.0" height="16.0" fill="#d2d2d2" stroke="#888888" stroke-width="1.0"/><text x="20.5" y="25.7" font-size="15" fill="#888888" text-anchor="middle" font-family="'Liberation Serif','DejaVu Serif',serif">T</text></svg></div>
<div class="btn " style="left:131px;top:45px"><svg width="32" height="32" viewBox="0 0 32 32"><rect x="4.200" y="6" width="15.800" height="16.500" fill="#800000"/><rect x="7.500" y="4.500" width="8" height="2.300" fill="#8a8a8a"/><rect x="10.2" y="12.0" width="14.0" height="14.5" fill="#fff" stroke="#000" stroke-width="1.4"/><text x="17.2" y="23.5" font-size="15" fill="#000" text-anchor="middle" font-family="'Liberation Serif','DejaVu Serif',serif">T</text></svg></div>
<div class="btn " style="left:163px;top:45px"><svg width="32" height="32" viewBox="0 0 32 32"><circle cx="12.600" cy="12.600" r="4.700" fill="none" stroke="#000" stroke-width="1.700"/><path d="M16 16L23.500 22.800" stroke="#000" stroke-width="1.800"/></svg></div>
<div class="btn dis" style="left:195px;top:45px"><svg width="32" height="32" viewBox="0 0 32 32"><circle cx="15.200" cy="10.200" r="4.300" fill="none" stroke="#888888" stroke-width="1.500"/><path d="M18.500 13.500L25 20" stroke="#888888" stroke-width="1.500"/><path d="M16.500 14.500C21 21 15 26 8 23.500" fill="none" stroke="#888888" stroke-width="2"/><path d="M7 19.500V25.500H12.500Z" fill="#888888"/></svg></div>
<div class="btn " style="left:227px;top:45px"><svg width="32" height="32" viewBox="0 0 32 32"><circle cx="17.700" cy="8.500" r="4.700" fill="none" stroke="#000" stroke-width="1.700"/><path d="M21 12L28.300 18.600" stroke="#000" stroke-width="1.800"/><text x="1.300" y="28" font-size="10" fill="#000" stroke="#000" stroke-width="0.250" font-family="'Liberation Serif','DejaVu Serif',serif">A<tspan font-family="'DejaVu Sans',sans-serif" font-size="9" font-weight="bold">→</tspan>B</text></svg></div>
<div class="btn " style="left:259px;top:45px"><svg width="32" height="32" viewBox="0 0 32 32"><rect x="3.500" y="6.500" width="7" height="7" fill="#fff" stroke="#555"/><path d="M4.500 9.500L6.500 12L11 5" fill="none" stroke="#000" stroke-width="1.300"/><path d="M13.700 10.200H26.800" stroke="#222" stroke-width="1.900"/><rect x="3.500" y="18" width="7" height="7" fill="#fff" stroke="#555"/><path d="M13.700 21.400H26.800" stroke="#222" stroke-width="1.900"/></svg></div>
<div class="btn " style="left:291px;top:45px"><svg width="32" height="32" viewBox="0 0 32 32"><text x="14.500" y="26.500" font-size="29" fill="#8b0000" text-anchor="middle" font-family="'Liberation Serif','DejaVu Serif',serif">?</text></svg></div>
<div style="position:absolute;font-weight:bold;font-size:12px;line-height:15px;white-space:nowrap;color:#333;left:3px;top:79px">LaTe<u>X</u> Code:</div>
<div class="a" style="left:2px;top:94px;width:346px;height:713px;border:1px solid #7a8a99;background:#fff"></div>
<div class="a" id="code" style="left:3px;top:95px;width:329px;height:696px;overflow:hidden;background:#fff"><div style="position:absolute;left:3px;top:4px"><div class="ln"><span class="b">\rmfamily\mdseries\upshape\normalsize</span><span class="k"> A sample page of text</span></div><div class="ln">&nbsp;</div><div class="ln"><span class="b">\centering</span></div><div class="ln"><span class="b">\rmfamily\mdseries\itshape\normalsize</span><span class="k"> y</span><span class="b">\rmfamily\mdseries\upshape\normalsize</span></div><div class="ln"><span class="b">$ \sum  \alpha  $\rmfamily\mdseries\itshape\normalsize</span></div><div class="ln"><span class="b">\rmfamily\mdseries\itshape\normalsize</span><span class="k"> x</span><span class="b">\rmfamily\mdseries\upshape\normalsize</span></div><div class="ln"><span class="b">mfamily\mdseries\upshape\normalsize</span></div><div class="ln">&nbsp;</div><div class="ln"><span class="b">\flowframtkNoRagged</span></div><div class="ln"><span class="k">Lorem ipsum dolor sit amet,</span></div><div class="ln"><span class="b">\uline{</span><span class="k">con</span><span class="b">\-</span><span class="k">sectetuer</span><span class="b">}</span><span class="k"> adi</span><span class="b">\-</span><span class="k">piscing elit. Ut purus elit, vestibulum ut,</span></div><div class="ln"><span class="k">placerat ac, adi</span><span class="b">\-</span><span class="k">piscing vitae, felis. Curabitur dictum gravida mauris.</span></div><div class="ln"><span class="k">Nam arcu libero, nonummy eget, con</span><span class="b">\-</span><span class="k">sectetuer id, vulputate a, magna. Donec</span></div><div class="ln"><span class="k">vehicula augue eu neque. Pellentesque habitant morbi tristique senectus et</span></div><div class="ln"><span class="k">netus et malesuada fames ac turpis egestas. Mauris ut leo. Cras viverra metus</span></div><div class="ln"><span class="k">rhoncus sem. Nulla et lectus vestibulum urna fringilla ultrices. Phasellus eu</span></div><div class="ln"><span class="k">tellus sit amet tortor gravida placerat. Integer sapien est, iaculis in,</span></div><div class="ln"><span class="k">pretium quis, viverra ac, nunc. Praesent eget sem vel leo ultrices bibendum.</span></div><div class="ln"><span class="k">Aenean faucibus.  Morbi dolor nulla, malesuada eu, pulvinar at, mollis ac,</span></div><div class="ln"><span class="k">nulla.  Curabitur auctor semper nulla. Donec varius orci eget risus. Duis nibh</span></div><div class="ln"><span class="k">mi, congue eu, accumsan eleifend, sagittis quis, diam. Duis eget orci sit amet</span></div><div class="ln"><span class="k">orci dignissim rutrum.</span></div><div class="ln">&nbsp;</div><div class="ln"><span class="k">Nam dui ligula, fringilla a, euismod sodales, sollicitudin vel, wisi. Morbi</span></div><div class="ln"><span class="k">auctor lorem non justo. Nam lacus libero, pretium at, lobortis vitae, ultricies</span></div><div class="ln"><span class="k">et, tellus. Donec aliquet, tortor sed accumsan bibendum, erat ligula aliquet</span></div><div class="ln"><span class="k">magna, vitae ornare odio metus a mi. Morbi ac orci et nisl hendrerit mollis.</span></div><div class="ln"><span class="k">Suspendisse ut massa. Cras nec ante. Pellentesque a nulla. Cum sociis natoque</span></div><div class="ln"><span class="k">penatibus et magnis dis parturient montes, nascetur ridiculus mus. Aliquam</span></div><div class="ln"><span class="k">tincidunt urna. Nulla ullamcorper vestibulum turpis. Pellentesque cursus luctus</span></div><div class="ln"><span class="k">mauris.</span></div><div class="ln">&nbsp;</div><div class="ln"><span class="k">Nam dui ligula, fringilla a, euismod sodales, sollicitudin vel, wisi. Morbi</span></div><div class="ln"><span class="k">auctor lorem non justo. Nam lacus libero, pretium at, lobortis vitae, ultricies</span></div><div class="ln"><span class="k">et, tellus. Donec aliquet, tortor sed accumsan bibendum, erat ligula aliquet</span></div></div></div>
<svg class="a" style="left:332px;top:95px" width="16" height="711" viewBox="970 217 16 711">
<rect x="970" y="217" width="16" height="711" fill="#eee"/>
<path d="M970.500 217V913" stroke="#7a8a99"/>
<rect x="971" y="217" width="15" height="15" fill="#eee"/><path d="M970 232.500H986" stroke="#7a8a99"/><path d="M974 227l4.500 -5l4.500 5z" fill="#333"/>
<defs><linearGradient id="vth" x1="0" x2="1" y1="0" y2="0"><stop offset="0" stop-color="#fff"/><stop offset="0.300" stop-color="#dde8f3"/><stop offset="0.700" stop-color="#c8ddf2"/><stop offset="1" stop-color="#b8cfe5"/></linearGradient>
<linearGradient id="hth" x1="0" x2="0" y1="0" y2="1"><stop offset="0" stop-color="#fff"/><stop offset="0.300" stop-color="#dde8f3"/><stop offset="0.700" stop-color="#c8ddf2"/><stop offset="1" stop-color="#b8cfe5"/></linearGradient></defs>
<rect x="971.500" y="233.500" width="14" height="559.500" fill="url(#vth)" stroke="#6382bf"/>
<path d="M972.500 234V792.500M972 234.500H985" stroke="#fff" fill="none"/>
<path d="M975 509.500h7M975 511.500h7M975 513.500h7" stroke="#6382bf"/><path d="M975 510.500h7M975 512.500h7M975 514.500h7" stroke="#fff"/>
<path d="M970 897.500H986" stroke="#7a8a99"/><path d="M974 903h9l-4.500 4.500z" fill="#333"/>
<path d="M970 912.500H986" stroke="#7a8a99"/><path d="M985.500 217V928" stroke="#7a8a99"/>
</svg>
<svg class="a" style="left:3px;top:791px" width="330" height="15" viewBox="641 913 330 15">
<rect x="641" y="913" width="330" height="15" fill="#eee"/>
<path d="M641 913.500H971" stroke="#7a8a99"/>
<path d="M656.500 913V928" stroke="#7a8a99"/><path d="M651 917v8l-4.500 -4z" fill="#333"/>
<rect x="657.500" y="914.500" width="148" height="13" fill="url(#hth)" stroke="#6382bf"/>
<path d="M658 915.500H805M658.500 915V927" stroke="#fff" fill="none"/>
<path d="M728.500 918v6M730.500 918v6M732.500 918v6" stroke="#6382bf"/><path d="M729.500 918v6M731.500 918v6M733.500 918v6" stroke="#fff"/>
<path d="M954.500 913V928" stroke="#7a8a99"/><path d="M960 917v8l4.500 -4z" fill="#333"/>
<path d="M970.500 913V928" stroke="#7a8a99"/>
</svg>
</div>
</div>
</div>
<div id="status" class="a">
<div class="a" style="left:0;top:0;width:992px;height:4px;background:linear-gradient(#a0a0a0 0,#a0a0a0 1px,#707070 1px,#707070 2px,#ababab 2px,#ababab 3px,#707070 3px)"></div><div class="a" style="left:992px;top:0;width:3px;height:4px;background:linear-gradient(#a0a0a0 0,#a0a0a0 1px,#fff 1px)"></div>
<div class="sb" style="left:2px;width:98px">0.61,16.14 cm</div>
<div class="sb" style="left:101px;width:27px">cm</div>
<div class="sb" style="left:129px;width:50px">Modified</div>
<div class="sb" style="left:180px;width:18px"></div>
<svg class="a" style="left:181px;top:5px" width="16" height="14" viewBox="0 0 16 14"><circle cx="3.500" cy="7" r="2" fill="none" stroke="#808000" stroke-width="1.600"/><path d="M5.500 7H14M11 7V9.500M13.500 7V9.500" stroke="#808000" stroke-width="1.600" fill="none"/><path d="M5 2.500L12 11.500M12 2.500L5 11.500" stroke="#333" stroke-width="1.500"/></svg>
<div class="sb" style="left:200px;width:52px;padding-left:16px">93%</div>
<svg class="a" style="left:201px;top:5px" width="50" height="14" viewBox="0 0 50 14" fill="none" stroke="#222"><circle cx="5.500" cy="7.500" r="4.300"/><path d="M3 7.500H8"/><circle cx="42.500" cy="7.500" r="4.300" fill="#fff"/><path d="M40 7.500H45M42.500 5V10"/></svg>
<svg class="a" style="left:252px;top:5px" width="14" height="14" viewBox="0 0 14 14"><circle cx="6.500" cy="7.500" r="5.200" fill="#1c4fd8"/><text x="6.500" y="11" font-size="9.500" font-weight="bold" fill="#fff" text-anchor="middle" font-family="'Liberation Sans',sans-serif">?</text></svg>
<div class="sb" style="left:266px;width:726px;letter-spacing:0.03px">Click on path to select. Control-click to add to selection. Double click to select path underneath. Shift click to remove from selection.</div>
<div class="a" style="left:0;top:20px;width:995px;height:2px;background:#fafafa"></div>
</div>
</div></body></html>
